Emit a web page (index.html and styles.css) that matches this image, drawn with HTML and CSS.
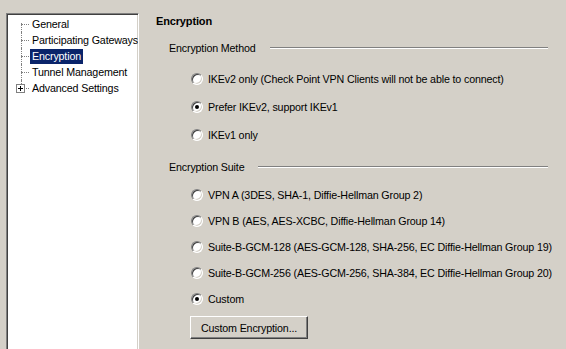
FILE: index.html
```html
<!DOCTYPE html>
<html lang="en">
<head>
    <meta charset="UTF-8">
    <title>Encryption</title>
    <link rel="stylesheet" href="styles.css">
</head>
<body>
    <div class="window">
        <!-- Arbol de paginas -->
        <div class="tree">
            <ul class="tree-list">
                <li><span class="label">General</span></li>
                <li><span class="label">Participating Gateways</span></li>
                <li><span class="label selected">Encryption</span></li>
                <li><span class="label">Tunnel Management</span></li>
                <li class="collapsed">
                    <svg class="expander" width="9" height="9" viewBox="0 0 9 9">
                        <rect x="0.5" y="0.5" width="8" height="8" fill="#fff" stroke="#808080"/>
                        <path d="M2 4.5h5M4.5 2v5" stroke="#000" stroke-width="1"/>
                    </svg>
                    <span class="label">Advanced Settings</span>
                </li>
            </ul>
        </div>

        <!-- Pagina de cifrado -->
        <div class="page">
            <h1>Encryption</h1>

            <div class="group-title method-title">
                <span>Encryption Method</span>
                <span class="rule"></span>
            </div>
            <div class="options method-options">
                <label class="option"><input type="radio" name="method"> IKEv2 only (Check Point VPN Clients will not be able to connect)</label>
                <label class="option"><input type="radio" name="method" checked> Prefer IKEv2, support IKEv1</label>
                <label class="option"><input type="radio" name="method"> IKEv1 only</label>
            </div>

            <div class="group-title suite-title">
                <span>Encryption Suite</span>
                <span class="rule"></span>
            </div>
            <div class="options suite-options">
                <label class="option"><input type="radio" name="suite"> VPN A (3DES, SHA-1, Diffie-Hellman Group 2)</label>
                <label class="option"><input type="radio" name="suite"> VPN B (AES, AES-XCBC, Diffie-Hellman Group 14)</label>
                <label class="option"><input type="radio" name="suite"> Suite-B-GCM-128 (AES-GCM-128, SHA-256, EC Diffie-Hellman Group 19)</label>
                <label class="option"><input type="radio" name="suite"> Suite-B-GCM-256 (AES-GCM-256, SHA-384, EC Diffie-Hellman Group 20)</label>
                <label class="option"><input type="radio" name="suite" checked> Custom</label>
            </div>
            <button class="btn">Custom Encryption...</button>
        </div>
    </div>
</body>
</html>
```

FILE: styles.css
```css
/* Estilos generales */
body {
    margin: 0;
    background-color: #d4d0c8;
    color: #000;
    font-family: "Liberation Sans", Arial, sans-serif;
    font-size: 10.7px;
    letter-spacing: -0.15px;
}

.window {
    display: flex;
    height: 349px;
    overflow: hidden;
}

/* Arbol */
.tree {
    width: 131px;
    height: 340px;
    margin: 13px 0 0 6px;
    flex-shrink: 0;
    background: #fff;
    border: 1px solid;
    border-color: #808080 #fff #fff #808080;
    box-shadow: inset 1px 1px #404040, inset -1px -1px #d4d0c8;
    overflow: hidden;
}

.tree-list {
    list-style: none;
    margin: 0;
    padding: 2px 0 0 1px;
}

.tree-list li {
    position: relative;
    height: 16px;
    line-height: 16px;
    padding-left: 22px;
    white-space: nowrap;
}

.tree-list li::before {
    content: "";
    position: absolute;
    left: 13px;
    top: 8px;
    width: 8px;
    border-top: 1px dotted #808080;
}

.tree-list li::after {
    content: "";
    position: absolute;
    left: 13px;
    top: 0;
    bottom: 0;
    border-left: 1px dotted #808080;
}

.tree-list li:first-child::after {
    top: 7px;
}

.tree-list li:last-child::after {
    bottom: 8px;
}

.expander {
    position: absolute;
    left: 8px;
    top: 4px;
    z-index: 1;
}

.label {
    padding: 0 2px;
    display: inline-block;
    line-height: 15px;
}

.label.selected {
    background: #0a246a;
    color: #fff;
}

/* Pagina */
.page {
    flex: 1;
    padding-left: 17px;
}

h1 {
    margin: 14px 0 0;
    font-size: 11px;
    line-height: 14px;
    font-weight: bold;
}

.group-title {
    display: flex;
    align-items: center;
    gap: 14px;
    height: 16px;
    padding-left: 13px;
    margin-right: 18px;
}

.rule {
    flex: 1;
    border-top: 1px solid #808080;
    border-bottom: 1px solid #fff;
}

.method-title {
    margin-top: 12px;
}

.suite-title {
    margin-top: 10px;
}

.options {
    padding-left: 35px;
}

.method-options {
    margin-top: 9px;
}

.method-options .option {
    height: 28px;
}

.suite-options {
    margin-top: 7px;
}

.suite-options .option {
    height: 26px;
}

.option {
    display: flex;
    align-items: center;
    gap: 5px;
    white-space: nowrap;
}

/* Radio estilo clasico */
input[type="radio"] {
    appearance: none;
    -webkit-appearance: none;
    margin: 0;
    width: 12px;
    height: 12px;
    border-radius: 50%;
    border: 1px solid;
    border-color: #808080 #fff #fff #808080;
    box-shadow: inset 1px 1px #404040, inset -1px -1px #d4d0c8;
    background: #fff;
    position: relative;
    flex-shrink: 0;
}

input[type="radio"]:checked::after {
    content: "";
    position: absolute;
    left: 3px;
    top: 3px;
    width: 4px;
    height: 4px;
    border-radius: 50%;
    background: #000;
}

.btn {
    margin: 4px 0 0 34px;
    width: 118px;
    height: 23px;
    padding: 0;
    background: #d4d0c8;
    font-family: inherit;
    font-size: 10.7px;
    letter-spacing: -0.15px;
    color: #000;
    border: 1px solid;
    border-color: #fff #404040 #404040 #fff;
    box-shadow: inset -1px -1px #808080;
}
```
